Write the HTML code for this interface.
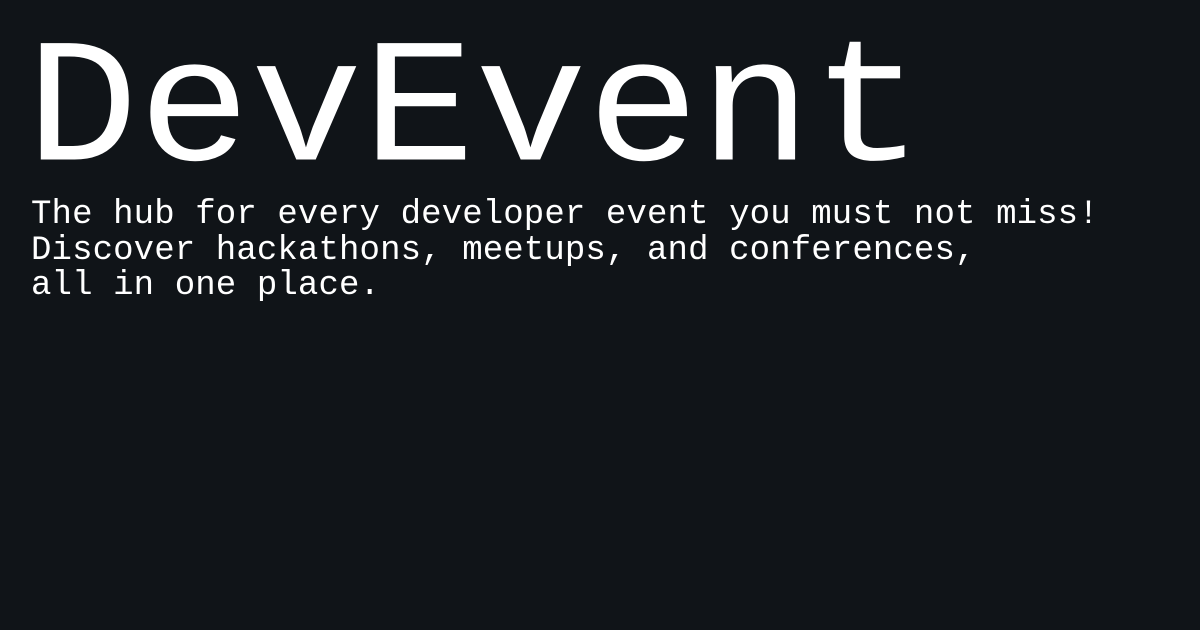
<!DOCTYPE html>
<html><head><meta charset="utf-8"><style>
html,body{margin:0;padding:0;}
body{width:1200px;height:630px;background:#101418;overflow:hidden;position:relative;font-family:"Liberation Mono",monospace;color:#fff;}
.t{position:absolute;left:26px;top:17px;font-size:187px;line-height:187px;white-space:pre;transform:scaleY(0.945);transform-origin:0 151px;}
.s{position:absolute;left:31px;top:198px;font-size:34px;line-height:35.5px;white-space:pre;letter-spacing:0.13px;}
</style></head><body>
<div class="t">DevEvent</div>
<div class="s">The hub for every developer event you must not miss!
Discover hackathons, meetups, and conferences,
all in one place.</div>
</body></html>
